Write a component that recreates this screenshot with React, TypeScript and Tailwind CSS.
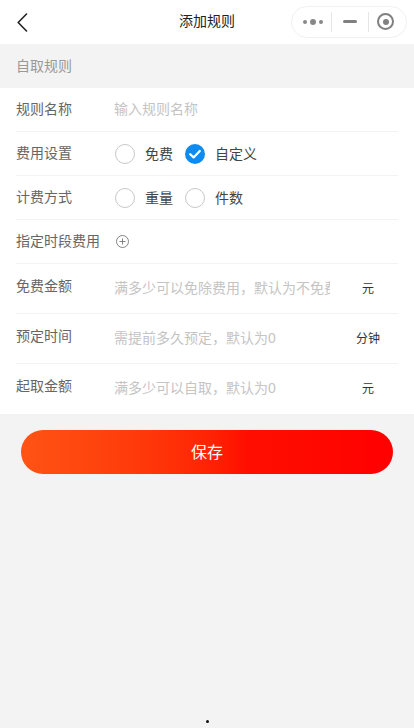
import { ReactNode } from 'react';

const Radio = ({ checked, label }: { checked?: boolean; label: string }) => (
  <div className="flex items-center gap-[10px]">
    {checked ? (
      <span className="flex h-5 w-5 items-center justify-center rounded-full bg-[#0f8bf0]">
        <svg width="14" height="14" viewBox="0 0 14 14" fill="none" aria-hidden="true">
          <path d="M2.2 7.2 5.6 10.4 11.8 4" stroke="#fff" strokeWidth="2.2" strokeLinecap="round" strokeLinejoin="round" />
        </svg>
      </span>
    ) : (
      <span className="h-5 w-5 rounded-full border border-[#c8c8c8] bg-white" />
    )}
    <span className="text-[14px] leading-5 text-[#444]">{label}</span>
  </div>
);

const Row = ({ label, children }: { label: string; children: ReactNode }) => (
  <div className="flex h-11 items-center border-b border-[#f3f3f3]">
    <div className="w-[99px] shrink-0 text-[14px] text-[#666]">{label}</div>
    {children}
  </div>
);

const AmountRow = ({ label, hint, unit, last }: { label: string; hint: string; unit: string; last?: boolean }) => (
  <div className={`flex h-[50px] items-center ${last ? '' : 'border-b border-[#f3f3f3]'}`}>
    <div className="mb-[5px] w-[99px] shrink-0 text-[14px] text-[#666]">{label}</div>
    <input
      readOnly
      placeholder={hint}
      className="-ml-[1px] mb-[1px] w-[216px] bg-transparent text-[14px] outline-none placeholder:text-[#c4c4c4]"
    />
    <div className="ml-[8px] w-[60px] text-center text-[12px] text-[#333]">{unit}</div>
  </div>
);

export default function App() {
  return (
    <div className="relative h-[728px] w-[414px] overflow-hidden bg-[#f3f3f3] font-['Liberation_Sans','Noto_Sans_CJK_SC',sans-serif]">
      <header className="grid h-11 grid-cols-[1fr_auto_1fr] items-center bg-white">
        <div className="pl-[16px]">
          <svg width="12" height="20" viewBox="0 0 12 20" fill="none" aria-hidden="true">
            <path d="M10.5 2 2.2 10.5 10.5 19" stroke="#222" strokeWidth="1.6" strokeLinecap="round" strokeLinejoin="round" />
          </svg>
        </div>
        <h1 className="mb-[1px] text-[14px] font-normal text-[#222]">添加规则</h1>
        <div className="flex justify-end pr-[7px]">
          <div className="mb-[1px] flex h-[32px] w-[116px] items-center rounded-full border border-[#f1f1f1] bg-white">
            <div className="flex w-[31px] items-center justify-end gap-[3px]">
              <span className="h-1 w-1 rounded-full bg-[#888]" />
              <span className="h-[6px] w-[6px] rounded-full bg-[#888]" />
              <span className="h-1 w-1 rounded-full bg-[#888]" />
            </div>
            <div className="ml-[8px] h-5 w-px bg-[#e6e6e6]" />
            <div className="flex w-[36px] justify-center">
              <span className="h-[3px] w-[14px] rounded-full bg-[#808080]" />
            </div>
            <div className="h-5 w-px bg-[#e6e6e6]" />
            <div className="ml-[8px] flex h-[17px] w-[17px] items-center justify-center rounded-full border-2 border-[#808080]">
              <span className="h-[6px] w-[6px] rounded-full bg-[#808080]" />
            </div>
          </div>
        </div>
      </header>

      <div className="flex h-11 items-center px-4 text-[14px] text-[#999]">自取规则</div>

      <section className="bg-white px-4">
        <Row label="规则名称">
          <input readOnly placeholder="输入规则名称" className="-ml-[1px] w-[216px] bg-transparent text-[14px] outline-none placeholder:text-[#c4c4c4]" />
        </Row>
        <Row label="费用设置">
          <div className="flex gap-[12px]">
            <Radio label="免费" />
            <Radio checked label="自定义" />
          </div>
        </Row>
        <Row label="计费方式">
          <div className="flex gap-[12px]">
            <Radio label="重量" />
            <Radio label="件数" />
          </div>
        </Row>
        <Row label="指定时段费用">
          <svg width="13" height="13" viewBox="0 0 13 13" fill="none" aria-hidden="true" className="ml-[1px]">
            <circle cx="6.5" cy="6.5" r="6" stroke="#777" strokeWidth="0.9" />
            <path d="M6.5 3.4v6.2M3.4 6.5h6.2" stroke="#777" strokeWidth="0.9" />
          </svg>
        </Row>
        <AmountRow label="免费金额" hint="满多少可以免除费用，默认为不免费" unit="元" />
        <AmountRow label="预定时间" hint="需提前多久预定，默认为0" unit="分钟" />
        <AmountRow label="起取金额" hint="满多少可以自取，默认为0" unit="元" last />
      </section>

      <div className="px-[21px] pt-4">
        <button className="h-11 w-full rounded-full bg-gradient-to-r from-[#ff5314] via-[#ff0f00] via-60% to-[#ff0000] pt-[2px] text-[16px] text-white">
          保存
        </button>
      </div>

      <span className="absolute bottom-[5px] left-[206px] h-[3px] w-[3px] rounded-full bg-[#111]" />
    </div>
  );
}
